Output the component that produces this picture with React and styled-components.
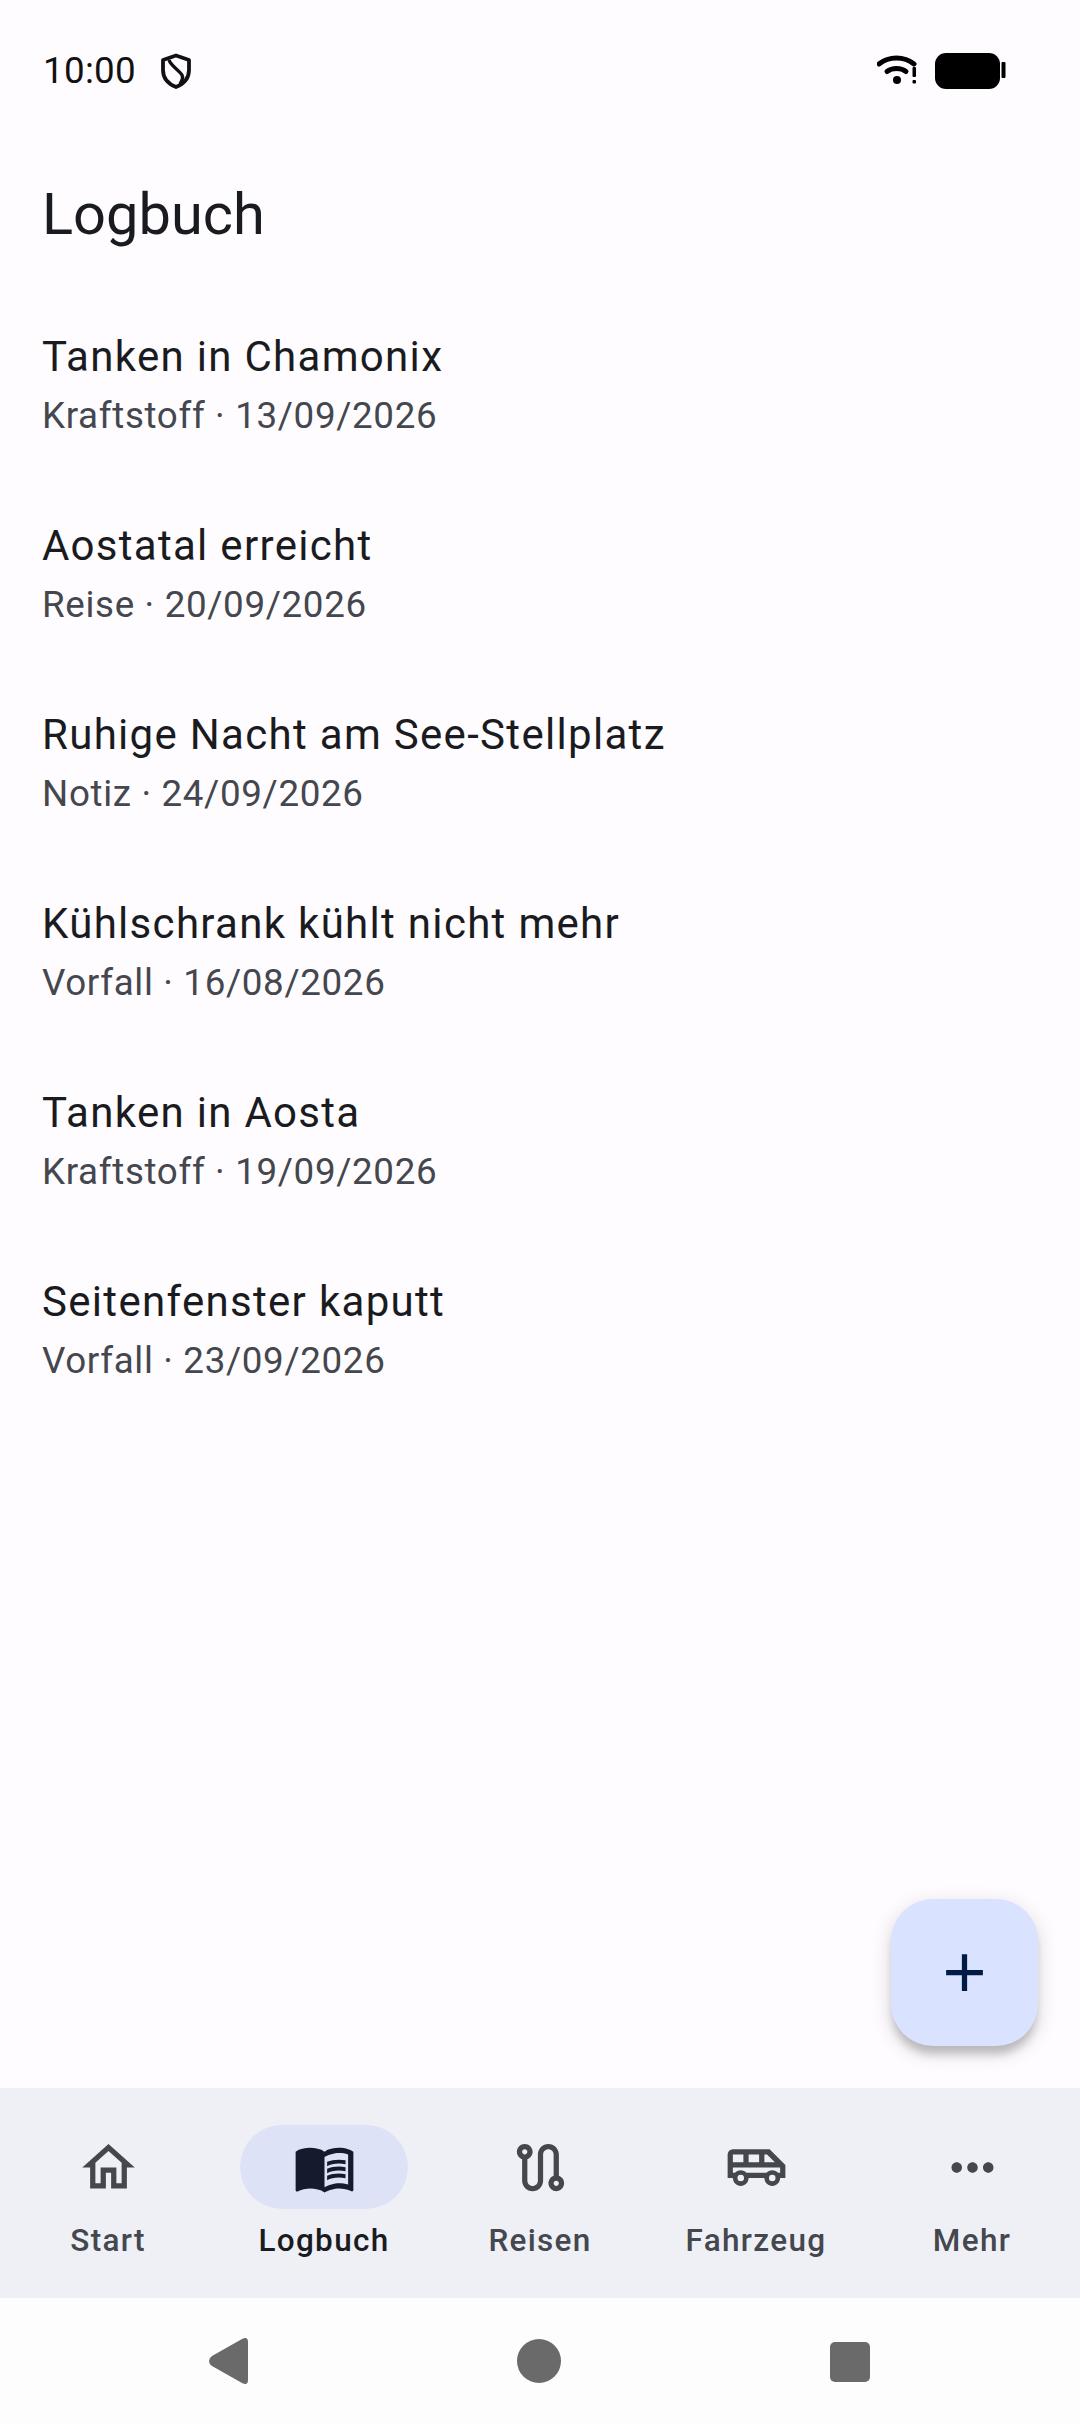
import React from "react";
import styled, { createGlobalStyle } from "styled-components";
import {
  MdOutlineHome,
  MdMenuBook,
  MdOutlineRoute,
  MdOutlineAirportShuttle,
  MdMoreHoriz,
  MdAdd,
} from "react-icons/md";

const Global = createGlobalStyle`
  html, body { margin: 0; padding: 0; background: #fefbff; }
  * { box-sizing: border-box; }
  #root { width: 1080px; height: 2424px; }
`;

const Screen = styled.div`
  width: 1080px;
  height: 2424px;
  display: flex;
  flex-direction: column;
  background: #fefcff;
  font-family: Roboto, "Noto Sans", sans-serif;
  color: #1a1b20;
  overflow: hidden;
`;

const StatusBar = styled.div`
  height: 178px;
  flex: none;
  display: flex;
  align-items: flex-start;
  padding: 53px 74px 0 43px;
`;

const Clock = styled.span`
  font-size: 36.75px;
  line-height: 36px;
  color: #111;
  letter-spacing: 0.3px;
`;

const StatusLeftIcon = styled.svg`
  width: 34px;
  height: 36px;
  margin-left: 23px;
  flex: none;
`;

const StatusRight = styled.div`
  margin-left: auto;
  display: flex;
  align-items: flex-start;
  gap: 16px;
`;

const WifiIcon = styled.svg`
  width: 42px;
  height: 30px;
  margin-top: 2px;
`;

const BatteryIcon = styled.svg`
  width: 71px;
  height: 36px;
`;

const Main = styled.main`
  flex: 1;
  position: relative;
  min-height: 0;
`;

const Title = styled.h1`
  margin: 0;
  padding: 0 42px;
  font-size: 57.75px;
  line-height: 72px;
  font-weight: 400;
  color: #1a1b20;
`;

const List = styled.ul`
  list-style: none;
  margin: 38px 0 0;
  padding: 0;
`;

const Row = styled.li`
  height: 189px;
  padding: 0 42px;
  display: flex;
  flex-direction: column;
  justify-content: center;
`;

const RowTitle = styled.div`
  font-size: 42px;
  line-height: 67px;
  letter-spacing: 1.31px;
  color: #1a1b20;
`;

const RowSub = styled.div`
  font-size: 36.75px;
  line-height: 52.5px;
  letter-spacing: 0.66px;
  color: #44474e;
`;

const Fab = styled.button`
  position: absolute;
  right: 42px;
  bottom: 42px;
  width: 147px;
  height: 147px;
  border: none;
  border-radius: 42px;
  background: #d9e2ff;
  color: #001a43;
  display: flex;
  align-items: center;
  justify-content: center;
  padding: 0;
  box-shadow: 0 10px 8px -2px rgba(0, 0, 0, 0.2), 0 6px 18px 4px rgba(0, 0, 0, 0.1);
  font-size: 63px;
`;

const Nav = styled.nav`
  height: 210px;
  flex: none;
  display: grid;
  grid-template-columns: repeat(5, 1fr);
  background: #eff0f6;
  padding-top: 37px;
`;

const NavItem = styled.div`
  display: flex;
  flex-direction: column;
  align-items: center;
  gap: 11px;
  color: ${(p) => (p.$active ? "#151b2c" : "#44474e")};
`;

const IconPill = styled.div`
  width: 168px;
  height: 84px;
  border-radius: 42px;
  display: flex;
  align-items: center;
  justify-content: center;
  background: ${(p) => (p.$active ? "#dde2f7" : "transparent")};
  font-size: 63px;
`;

const NavLabel = styled.span`
  font-size: 31.5px;
  line-height: 42px;
  font-weight: 500;
  letter-spacing: 1.31px;
  color: ${(p) => (p.$active ? "#1a1b20" : "#44474e")};
`;

const SystemBar = styled.div`
  height: 126px;
  flex: none;
  background: #fdfdfe;
  display: grid;
  grid-template-columns: repeat(3, 60px);
  justify-content: space-between;
  padding: 0 208px 0 206px;
  align-items: start;
`;

const SysIcon = styled.svg`
  width: 60px;
  height: 60px;
  margin-top: 33px;
  fill: #6a6a6a;
`;

const entries = [
  ["Tanken in Chamonix", "Kraftstoff · 13/09/2026"],
  ["Aostatal erreicht", "Reise · 20/09/2026"],
  ["Ruhige Nacht am See-Stellplatz", "Notiz · 24/09/2026"],
  ["Kühlschrank kühlt nicht mehr", "Vorfall · 16/08/2026"],
  ["Tanken in Aosta", "Kraftstoff · 19/09/2026"],
  ["Seitenfenster kaputt", "Vorfall · 23/09/2026"],
];

const tabs = [
  ["Start", MdOutlineHome],
  ["Logbuch", MdMenuBook],
  ["Reisen", MdOutlineRoute],
  ["Fahrzeug", MdOutlineAirportShuttle],
  ["Mehr", MdMoreHoriz],
];

export default function App() {
  return (
    <Screen>
      <Global />
      <StatusBar>
        <Clock>10:00</Clock>
        <StatusLeftIcon viewBox="0 0 34 36">
          <path
            d="M17 2.500 L30 7 V17 C30 25 24.500 31 17 34 C9.500 31 4 25 4 17 V7 Z"
            fill="none"
            stroke="#111"
            strokeWidth="3.800"
            strokeLinejoin="round"
          />
          <path d="M10 7 C12 13 20 17 23 22 C24.500 25 23 28 21 31" fill="none" stroke="#111" strokeWidth="3.400" />
        </StatusLeftIcon>
        <StatusRight>
          <WifiIcon viewBox="0 0 42 30">
            <path d="M2 9 C12 1 27 1 37 9" fill="none" stroke="#000" strokeWidth="5" strokeLinecap="round" />
            <path d="M10 16.500 C15 12.500 24 12.500 29 16.500" fill="none" stroke="#000" strokeWidth="5" strokeLinecap="round" />
            <circle cx="20" cy="25" r="4" fill="#000" />
            <rect x="35.500" y="12" width="3.500" height="10" rx="1" fill="#000" />
            <rect x="35.500" y="25" width="3.500" height="3.500" rx="1" fill="#000" />
          </WifiIcon>
          <BatteryIcon viewBox="0 0 71 36">
            <rect x="0" y="0" width="65" height="36" rx="11" fill="#000" />
            <rect x="66.500" y="9" width="4" height="16" rx="1" fill="#000" />
          </BatteryIcon>
        </StatusRight>
      </StatusBar>
      <Main>
        <Title>Logbuch</Title>
        <List>
          {entries.map(([t, s]) => (
            <Row key={t}>
              <RowTitle>{t}</RowTitle>
              <RowSub>{s}</RowSub>
            </Row>
          ))}
        </List>
        <Fab aria-label="Hinzufügen">
          <MdAdd />
        </Fab>
      </Main>
      <Nav>
        {tabs.map(([label, Icon]) => {
          const active = label === "Logbuch";
          return (
            <NavItem key={label} $active={active}>
              <IconPill $active={active}>
                <Icon />
              </IconPill>
              <NavLabel $active={active}>{label}</NavLabel>
            </NavItem>
          );
        })}
      </Nav>
      <SystemBar>
        <SysIcon viewBox="0 0 60 60">
          <path d="M3 30 Q3 27 6 25 L36 8 Q42 5 42 11 L42 49 Q42 55 36 52 L6 35 Q3 33 3 30 Z" />
        </SysIcon>
        <SysIcon viewBox="0 0 60 60">
          <circle cx="30" cy="30" r="22" />
        </SysIcon>
        <SysIcon viewBox="0 0 60 60">
          <rect x="18" y="11" width="40" height="40" rx="5" />
        </SysIcon>
      </SystemBar>
    </Screen>
  );
}
